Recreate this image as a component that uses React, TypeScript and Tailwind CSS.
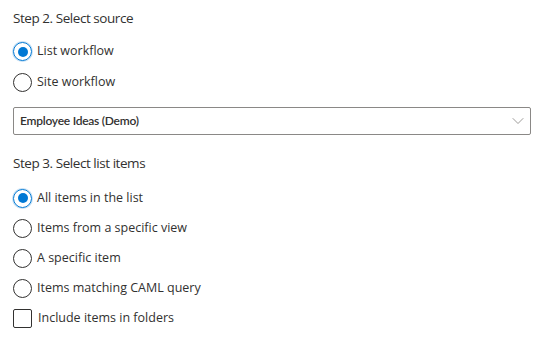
import { ChevronDown } from 'lucide-react';

const font = { fontFamily: '"Open Sans", "Noto Sans", sans-serif' };
const boxFont = { fontFamily: 'Lato, "Open Sans", sans-serif' };

function Radio({ label, checked, tall }: { label: string; checked?: boolean; tall?: boolean }) {
  return (
    <label
      className={
        tall
          ? 'flex h-[31px] items-center gap-[5px] text-[12.5px] text-[#323130]'
          : 'flex h-[30px] items-center gap-[5px] text-[12.5px] text-[#323130]'
      }
    >
      <span
        className={
          checked
            ? 'flex h-[19px] w-[19px] items-center justify-center rounded-full border border-[#0078d4] shadow-[0_0_0_1px_#c7e0f4]'
            : 'flex h-[19px] w-[19px] items-center justify-center rounded-full border border-[#323130]'
        }
      >
        {checked ? <span className="h-[10px] w-[10px] rounded-full bg-[#0078d4]" /> : null}
      </span>
      <span>{label}</span>
    </label>
  );
}

export default function App() {
  return (
    <div className="h-[338px] w-[546px] bg-white px-[13px] pt-[8px] text-[#323130]" style={font}>
      <h2 className="h-[20px] text-[13.5px] leading-[20px] tracking-[-0.45px]">Step 2. Select source</h2>
      <div className="mt-[8px] flex flex-col">
        <Radio label="List workflow" checked tall />
        <Radio label="Site workflow" tall />
      </div>
      <div className="mt-[9px] flex h-[28px] w-[518px] items-center justify-between rounded-[2px] border border-[#8a8886] pl-[6px] pr-[2px]">
        <span className="text-[12px] font-semibold tracking-[-0.25px]" style={boxFont}>
          Employee Ideas (Demo)
        </span>
        <ChevronDown size={20} strokeWidth={1} className="text-[#8a8886]" />
      </div>
      <h2 className="mt-[18px] h-[20px] text-[13.5px] leading-[20px] tracking-[-0.45px]">Step 3. Select list items</h2>
      <div className="mt-[10px] flex flex-col">
        <Radio label="All items in the list" checked />
        <Radio label="Items from a specific view" />
        <Radio label="A specific item" />
        <Radio label="Items matching CAML query" />
      </div>
      <label className="mt-[6px] flex items-center gap-[6px] text-[12.5px]">
        <span className="h-[19px] w-[19px] rounded-[2px] border border-[#323130]" />
        <span>Include items in folders</span>
      </label>
    </div>
  );
}
